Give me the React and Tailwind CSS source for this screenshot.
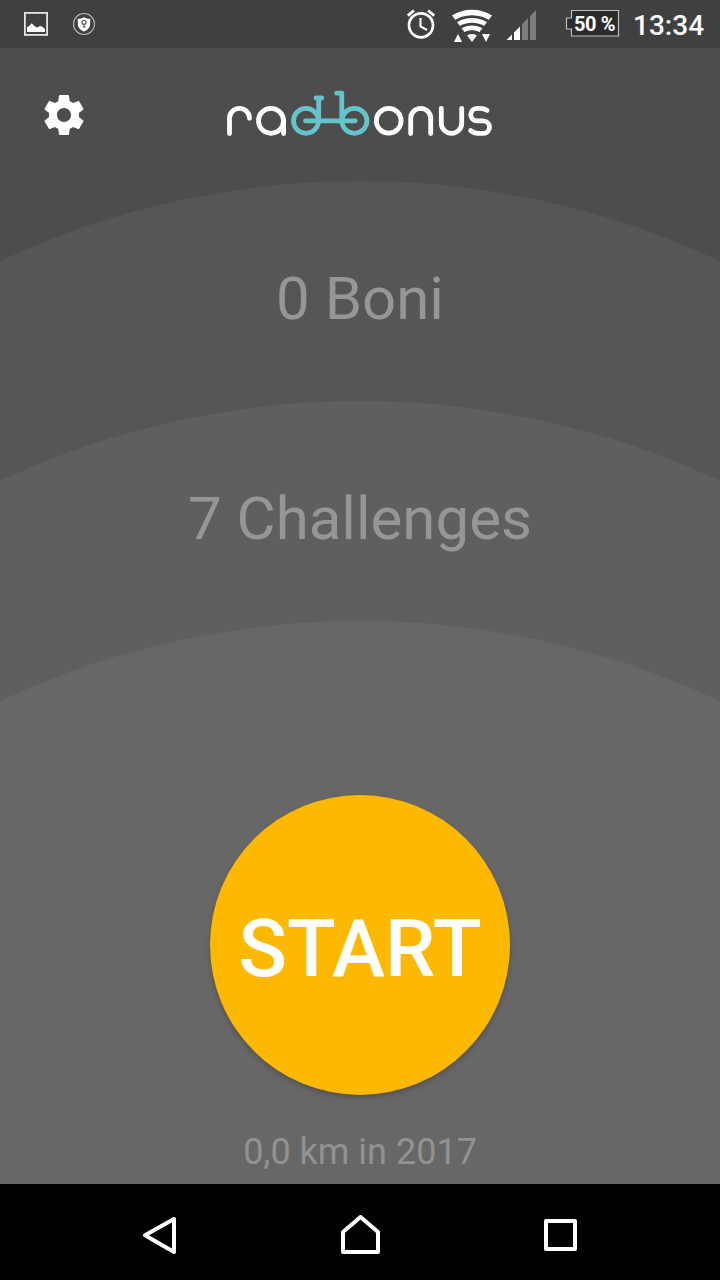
import React from "react";

const arc = "absolute top-0 left-1/2 h-[1700px] w-[1700px] -translate-x-1/2 rounded-full";

function StatusBar() {
  return (
    <header className="flex h-12 shrink-0 items-start bg-[#404040] text-white">
      <svg className="mt-3 ml-6 h-6 w-6" viewBox="0 0 24 24">
        <rect x="0.9" y="0.9" width="22.2" height="22" fill="none" stroke="#e4e4e4" strokeWidth="1.8" />
        <path d="M3 20V15.3L5 14L7.8 11.2L11 14.5L13 15.5L16 14L18 14.5L21 17V20Z" fill="#fff" />
      </svg>
      <svg className="mt-3 ml-6 h-6 w-6" viewBox="0 0 24 24">
        <circle cx="12" cy="12" r="10.5" fill="none" stroke="#b8b8b8" strokeWidth="1.1" />
        <path d="M12 5.2C14 6.4 16 6.7 18.2 6.8V12C18.2 15.5 15.5 18.3 12 19.6C8.5 18.3 5.8 15.5 5.8 12V6.8C8 6.7 10 6.4 12 5.2Z" fill="#fff" />
        <circle cx="12" cy="10.3" r="2" fill="none" stroke="#555" strokeWidth="1.2" />
        <path d="M12 12.3V16M12 15H13.5" stroke="#555" strokeWidth="1.2" />
      </svg>
      <svg className="ml-[309px] h-12 w-8" viewBox="405 0 32 48" fill="none" stroke="#fff">
        <circle cx="421" cy="25.3" r="12" strokeWidth="2.7" />
        <path d="M407.8 15.6L414 10.5M434.2 15.6L428 10.5" strokeWidth="2.8" />
        <path d="M420.5 18V26.3L427 30" strokeWidth="2.1" />
      </svg>
      <svg className="ml-[14px] h-12 w-[42px]" viewBox="451 0 42 48" fill="none">
        <clipPath id="fan"><path d="M472 42L452 15.5V8H492V15.5Z" /></clipPath>
        <g clipPath="url(#fan)" stroke="#fff">
          <circle cx="472" cy="47.5" r="35" strokeWidth="5.4" />
          <circle cx="472" cy="47.5" r="27.1" strokeWidth="4.8" />
          <circle cx="472" cy="46.5" r="18.6" strokeWidth="4.8" />
          <circle cx="472" cy="42" r="4" strokeWidth="8" />
        </g>
        <path d="M454 42L458 34L462 42ZM482 34H490L486 42Z" fill="#fff" />
      </svg>
      <svg className="ml-[13px] h-12 w-8" viewBox="506 0 32 48">
        <path d="M506.5 40L512 34.5V40ZM514 40V32.5L520 26.5V40Z" fill="#fff" />
        <path d="M522 40V24L528 18V40ZM530 40V16L536 10V40Z" fill="#7c7c7c" />
      </svg>
      <div className="relative ml-[27px] h-12 w-[55px]">
        <svg className="h-12 w-[55px]" viewBox="565 0 55 48">
          <path d="M571.5 10.5H618.5V36H571.5V29H566.5V18H571.5Z" fill="#2b2b2b" stroke="#bdbdbd" strokeWidth="1.2" />
        </svg>
        <span className="absolute top-[12px] left-[9px] text-[20px] leading-[24px] font-bold tracking-[-0.4px] whitespace-nowrap">50 %</span>
      </div>
      <span className="mt-[10px] ml-[13px] text-[28px] leading-8 font-medium whitespace-nowrap">13:34</span>
    </header>
  );
}

function Logo() {
  return (
    <svg className="h-[50px] w-[270px]" viewBox="225 88 270 50" fill="none" strokeLinecap="round" strokeLinejoin="round" role="img" aria-label="radbonus">
      <g stroke="#fff" strokeWidth="4.8">
        <path d="M229.5 133.5V118.3A10 10 0 0 1 249.5 118.3" />
        <circle cx="271" cy="120.8" r="12.5" />
        <path d="M283.6 120.8V133.5" />
        <circle cx="388.7" cy="120.8" r="12.4" />
        <path d="M410.7 133.5V118.3A10 10 0 0 1 430.7 118.3V133.5" />
        <path d="M441.3 108.3V123.2A10.2 10.2 0 0 0 461.7 123.2V108.3" />
        <path d="M487 110.3Q484 108.3 480 108.3H477A6.2 6.2 0 0 0 477 120.8H483.2A6.3 6.3 0 0 1 483.2 133.4H478Q473.5 133.4 470.6 130.6" />
      </g>
      <g stroke="#65c3cb" strokeWidth="4.8">
        <circle cx="306" cy="120.8" r="12.5" />
        <circle cx="354.4" cy="120.8" r="12.5" />
        <path d="M305.5 120.8H355.2M318.7 120.8V98M316 98H321.8M341.8 120.8V93.2H336.7" />
      </g>
    </svg>
  );
}

export default function App() {
  return (
    <div className="flex h-[1280px] w-[720px] flex-col overflow-hidden bg-[#4d4d4d] [font-family:Roboto,sans-serif]">
      <StatusBar />
      <main className="relative flex h-[1136px] flex-col overflow-hidden bg-[#4d4d4d]">
        <div className="flex h-[133px] shrink-0 items-start">
          <button className="mt-[43px] ml-10" aria-label="Einstellungen">
            <svg className="h-12 w-12" viewBox="0 0 24 24" fill="#fff">
              <path d="M19.43 12.98c.04-.32.07-.64.07-.98s-.03-.66-.07-.98l2.11-1.65c.19-.15.24-.42.12-.64l-2-3.46c-.12-.22-.39-.3-.61-.22l-2.49 1c-.52-.4-1.08-.73-1.69-.98l-.38-2.65C14.46 2.18 14.25 2 14 2h-4c-.25 0-.46.18-.49.42l-.38 2.65c-.61.25-1.17.59-1.69.98l-2.49-1c-.23-.09-.49 0-.61.22l-2 3.46c-.13.22-.07.49.12.64l2.11 1.65c-.04.32-.07.65-.07.98s.03.66.07.98l-2.11 1.65c-.19.15-.24.42-.12.64l2 3.46c.12.22.39.3.61.22l2.49-1c.52.4 1.08.73 1.69.98l.38 2.65c.03.24.24.42.49.42h4c.25 0 .46-.18.49-.42l.38-2.65c.61-.25 1.17-.59 1.69-.98l2.49 1c.23.09.49 0 .61-.22l2-3.46c.12-.22.07-.49-.12-.64l-2.11-1.65zM12 15.5c-1.93 0-3.5-1.57-3.5-3.5s1.57-3.5 3.5-3.5 3.5 1.57 3.5 3.5-1.57 3.5-3.5 3.5z" />
            </svg>
          </button>
          <div className="mt-10 ml-[137px]"><Logo /></div>
        </div>
        <section className="relative h-[220px] shrink-0">
          <div className={`${arc} bg-[#565656]`} />
          <div className="absolute top-[79px] left-0 h-[220px] w-px bg-[#644f51]" />
          <p className="relative pt-[83px] text-center text-[60px] leading-[70px] text-[#969696]">0 Boni</p>
        </section>
        <section className="relative h-[220px] shrink-0">
          <div className={`${arc} bg-[#5f5f5f]`} />
          <p className="relative pt-[83px] text-center text-[60px] leading-[70px] text-[#969696]">7 Challenges</p>
        </section>
        <section className="relative flex h-[563px] shrink-0 flex-col items-center">
          <div className={`${arc} bg-[#676767]`} />
          <button className="relative mt-[174px] flex h-[300px] w-[300px] items-center justify-center rounded-full bg-[#fdb800] pt-2 text-[80px] font-medium text-white shadow-[0_3px_5px_rgba(0,0,0,0.2)]">START</button>
          <p className="relative mt-[36px] text-[36px] leading-[42px] text-[#929292]">0,0 km in 2017</p>
        </section>
      </main>
      <nav className="flex h-24 shrink-0 items-center justify-between bg-black px-[140px] pt-1.5">
        <svg className="h-10 w-10" viewBox="140 1215 40 40" fill="none" stroke="#fff" strokeWidth="4" strokeLinejoin="round"><path d="M145 1235.3L174 1219V1252Z" /></svg>
        <svg className="h-10 w-10" viewBox="340 1215 40 40" fill="none" stroke="#fff" strokeWidth="4" strokeLinejoin="round"><path d="M343 1252V1232L360.5 1217L378 1232V1252Z" /></svg>
        <svg className="h-10 w-10" viewBox="540 1215 40 40" fill="none" stroke="#fff" strokeWidth="4" strokeLinejoin="round"><path d="M546 1221H575V1249H546Z" /></svg>
      </nav>
    </div>
  );
}
